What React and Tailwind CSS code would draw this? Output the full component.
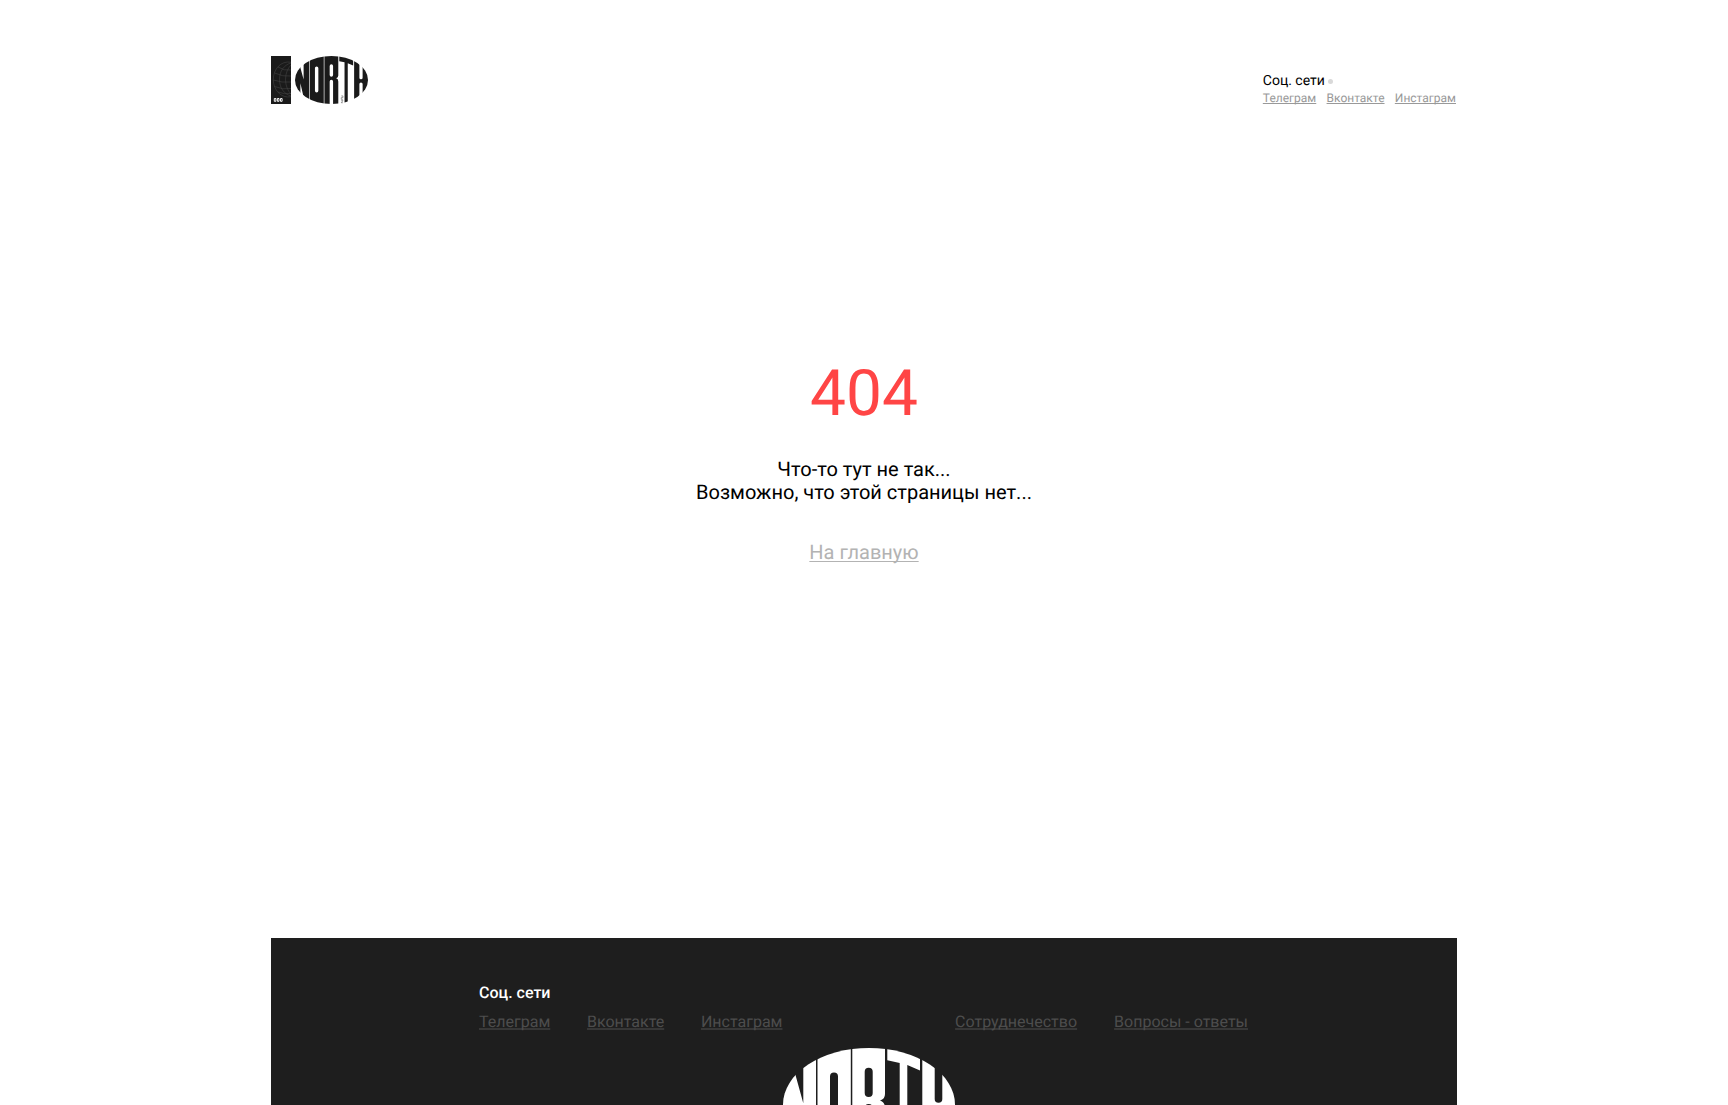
function NorthMark({ className, tag }) {
  return (
    <svg viewBox="0 0 172 113" className={className} fill="currentColor" preserveAspectRatio="none">
      <defs>
        <clipPath id="north-oval">
          <ellipse cx="86" cy="56.5" rx="86" ry="56.5" />
        </clipPath>
      </defs>
      <g clipPath="url(#north-oval)" fillRule="evenodd">
        <path d="M0 0H12.7V27.7L20.3 55.3V0H33V113H24L12.7 64V113H0Z" />
        <path d="M34.5 0H67.8V113H34.5ZM47 28.5V82a4 4 0 0 0 8 0V28.5a4 4 0 0 0-8 0Z" />
        <path d="M69.3 0H102V46Q102 51 97 52.5Q102 54 102 60V113H89.7V60a4 4 0 0 0-8 0V113H69.3ZM81.7 23.7V45a4 4 0 0 0 8 0V23.7a4 4 0 0 0-8 0Z" />
        <path d="M104.3 0H137V22.5L124.3 17V113H116.7V15L104.3 12.3Z" />
        <path d="M139.3 0H151.7V51a3.8 3.8 0 0 0 7.6 0V0H172V113H159.3V66a3.8 3.8 0 0 0-7.6 0V113H139.3Z" />
      </g>
      {tag && (
        <g fill="none" stroke="currentColor" strokeWidth="1.2" opacity="0.8">
          <path d="M109 94h4v4h-4v4h4M109 105h4l-4 5h4" />
        </g>
      )}
    </svg>
  );
}

function GlobePanel() {
  return (
    <svg viewBox="0 0 20 48" className="h-12 w-5">
      <rect width="20" height="48" fill="#1a1a1a" />
      <g fill="none" stroke="#4a4a4a" strokeWidth="0.5">
        <path d="M20 6.2C10 4.500 2.300 13 2.300 23.500S10 42.500 20 40.800" />
        <path d="M20 7C13 9 8.500 15 8.500 23.500S13 38 20 40" />
        <path d="M20 9C17 12 14.500 17 14.500 23.500S17 35 20 38" />
        <path d="M7 11Q13 15 20 14M3.500 17Q12 21 20 20M2.300 24Q11 27 20 26M3.500 30.500Q12 34 20 32.500M7 36Q13 38.500 20 37.500" />
      </g>
      <g fill="none" stroke="#f2f2f2" strokeWidth="1">
        <path d="M3.300 42.500h1.600v2.800h-1.600zM6.400 42.500h1.600v2.800h-1.600zM9.500 42.500h1.600v2.800h-1.600z" />
      </g>
    </svg>
  );
}

const socials = ["Телеграм", "Вконтакте", "Инстаграм"];

function Link({ children, className = "" }) {
  return (
    <a href="#" className={`underline [text-decoration-skip-ink:none] ${className}`}>
      {children}
    </a>
  );
}

const footerLink = "decoration-[#373737] decoration-2 underline-offset-1";

export default function App() {
  return (
    <div className="flex h-[1105px] flex-col overflow-hidden bg-white font-['Roboto',sans-serif] text-black [text-rendering:geometricPrecision]">
      <div className="mx-auto flex w-[1186px] grow flex-col">
        <header className="flex h-[104px] shrink-0 items-end justify-between">
          <div className="flex gap-1 text-[#1a1a1a]">
            <GlobePanel />
            <NorthMark className="h-12 w-[73px]" tag />
          </div>
          <div className="-mb-px pr-px">
            <div className="flex items-center gap-[3px] text-sm leading-4">
              <span className="pt-0.5">Соц. сети</span>
              <span className="mt-0.5 size-[5px] rounded-full bg-[#d9d9d9]" />
            </div>
            <nav className="mt-0.5 flex gap-[10.3px] text-xs leading-[14px] text-[#999999]">
              {socials.map((s) => (
                <Link key={s}>{s}</Link>
              ))}
            </nav>
          </div>
        </header>

        <main className="flex h-[834px] shrink-0 flex-col items-center pt-[252px] text-center">
          <h1 className="text-[64px] leading-[75px] text-[#ff4545]">404</h1>
          <p className="mt-[27px] text-xl leading-[23px]">
            Что-то тут не так...
            <br />
            Возможно, что этой страницы нет...
          </p>
          <Link className="mt-[37px] text-xl leading-[23px] text-[#b3b3b3] decoration-1 underline-offset-2">На главную</Link>
        </main>

        <footer className="flex grow flex-col bg-[#1e1e1e] pt-[45px]">
          <div className="flex justify-between pr-[209px] pl-[208px]">
            <div>
              <div className="text-base leading-[19px] font-medium text-white">Соц. сети</div>
              <nav className="mt-2.5 flex gap-[36.7px] text-base leading-[19px] text-[#4d4d4d]">
                {socials.map((s) => (
                  <Link key={s} className={footerLink}>{s}</Link>
                ))}
              </nav>
            </div>
            <nav className="flex items-end gap-[37px] text-base leading-[19px] text-[#4d4d4d]">
              <Link className={footerLink}>Сотруднечество</Link>
              <Link className={footerLink}>Вопросы - ответы</Link>
            </nav>
          </div>
          <NorthMark className="mt-[17px] ml-[512px] h-[113px] w-[172px] shrink-0 text-white" />
        </footer>
      </div>
    </div>
  );
}
